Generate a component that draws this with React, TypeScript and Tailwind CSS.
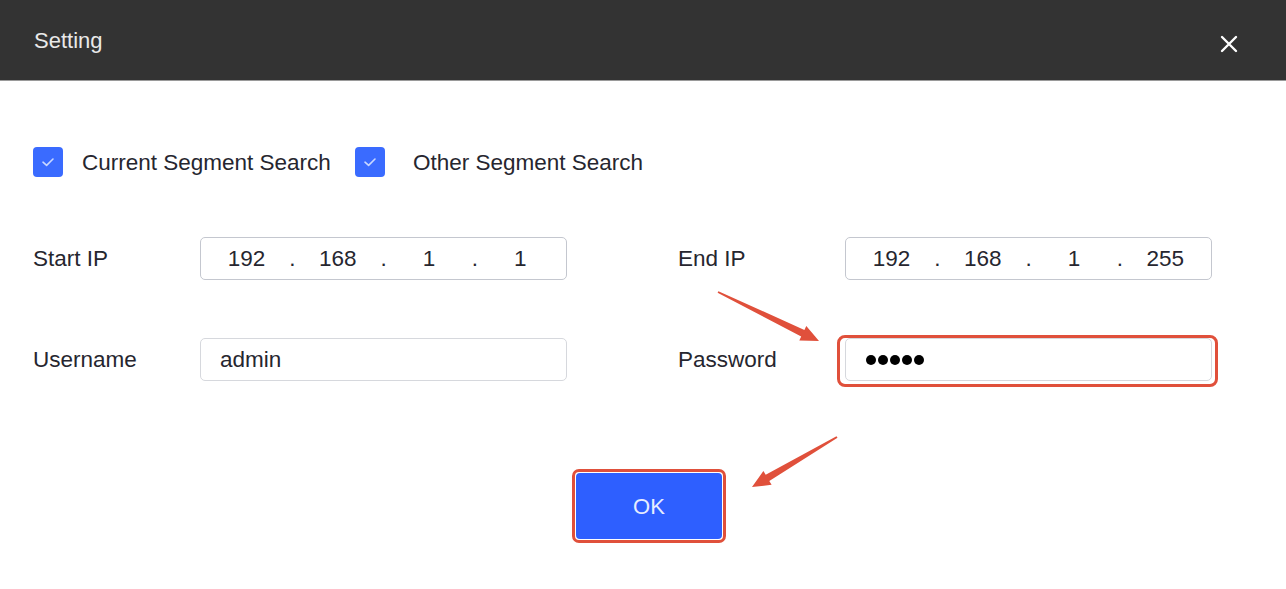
import React from 'react';

const font = { fontFamily: '"Liberation Sans", Arial, sans-serif' };

function CheckBox() {
  return (
    <div className="w-[30px] h-[30px] rounded-[4px] bg-[#3a6bff] flex items-center justify-center shrink-0">
      <svg width="14" height="10" viewBox="0 0 14 10" fill="none">
        <path d="M2 5.2 L5.6 8.4 L12 2" stroke="#c9d8ff" strokeWidth="1.6" strokeLinecap="round" strokeLinejoin="round" />
      </svg>
    </div>
  );
}

function IpBox({ parts }: { parts: string[] }) {
  return (
    <div className="w-[367px] h-[43px] border border-[#c4c7cf] rounded-[5px] flex items-center bg-white">
      {parts.map((p, i) => (
        <React.Fragment key={i}>
          <span className="flex-1 text-center">{p}</span>
          {i < parts.length - 1 && <span className="w-0 flex justify-center">.</span>}
        </React.Fragment>
      ))}
    </div>
  );
}

export default function App() {
  return (
    <div className="relative w-[1286px] h-[589px] bg-white text-[22.5px] text-[#26262f] overflow-hidden" style={font}>
      {/* title bar */}
      <div className="h-[81px] bg-[#333333] border-b border-[#9a9a9a] flex items-center justify-between pl-[34px] pr-[48px]">
        <span className="text-[#e9e9e9] text-[22px]">Setting</span>
        <svg width="18" height="18" viewBox="0 0 18 18" className="mt-[8px]">
          <path d="M2 2 L16 16 M16 2 L2 16" stroke="#ffffff" strokeWidth="2.4" strokeLinecap="round" />
        </svg>
      </div>

      <div className="pl-[33px] pt-[66px]">
        {/* search options */}
        <div className="flex items-center h-[30px]">
          <CheckBox />
          <span className="ml-[19px] w-[273px] shrink-0 mt-[2px]">Current Segment Search</span>
          <CheckBox />
          <span className="ml-[28px] mt-[2px]">Other Segment Search</span>
        </div>

        {/* ip range */}
        <div className="flex items-center mt-[60px]">
          <span className="w-[167px]">Start IP</span>
          <IpBox parts={['192', '168', '1', '1']} />
          <span className="ml-[111px] w-[167px]">End IP</span>
          <IpBox parts={['192', '168', '1', '255']} />
        </div>

        {/* credentials */}
        <div className="flex items-center mt-[58px]">
          <span className="w-[167px]">Username</span>
          <div className="w-[367px] h-[43px] border border-[#d6d8dd] rounded-[5px] flex items-center px-[19px]">admin</div>
          <span className="ml-[111px] w-[167px]">Password</span>
          <div className="relative w-[367px] h-[43px]">
            <div className="w-full h-full border border-[#d6d8dd] rounded-[5px] flex items-center gap-[2px] px-[20px]">
              {[0, 1, 2, 3, 4].map((i) => (
                <span key={i} className="w-[10px] h-[10px] rounded-full bg-black" />
              ))}
            </div>
            <div className="absolute -left-[8px] -right-[6px] -top-[3px] -bottom-[6px] border-[3px] border-[#e0503b] rounded-[8px]" />
          </div>
        </div>
      </div>

      {/* confirm */}
      <div className="flex justify-center mt-[88px] pl-[12px]">
        <div className="border-[3px] border-[#e0503b] rounded-[7px] p-[1px]">
          <button className="w-[146px] h-[66px] rounded-[4px] bg-[#2e5fff] text-[#e6ecff] text-[22px]">OK</button>
        </div>
      </div>

      {/* annotation arrows */}
      <svg className="absolute inset-0 pointer-events-none" width="1286" height="589">
        <polygon
          points="717.6,292.8 801.2,336.5 799.3,340.4 819,341 806.3,326 804.4,330 718.4,291.2"
          fill="#e0503b"
        />
        <polygon
          points="837.5,437.7 769.3,481 771.6,484.8 752,487 763.4,471 765.7,474.8 836.5,436.3"
          fill="#e0503b"
        />
      </svg>
    </div>
  );
}
